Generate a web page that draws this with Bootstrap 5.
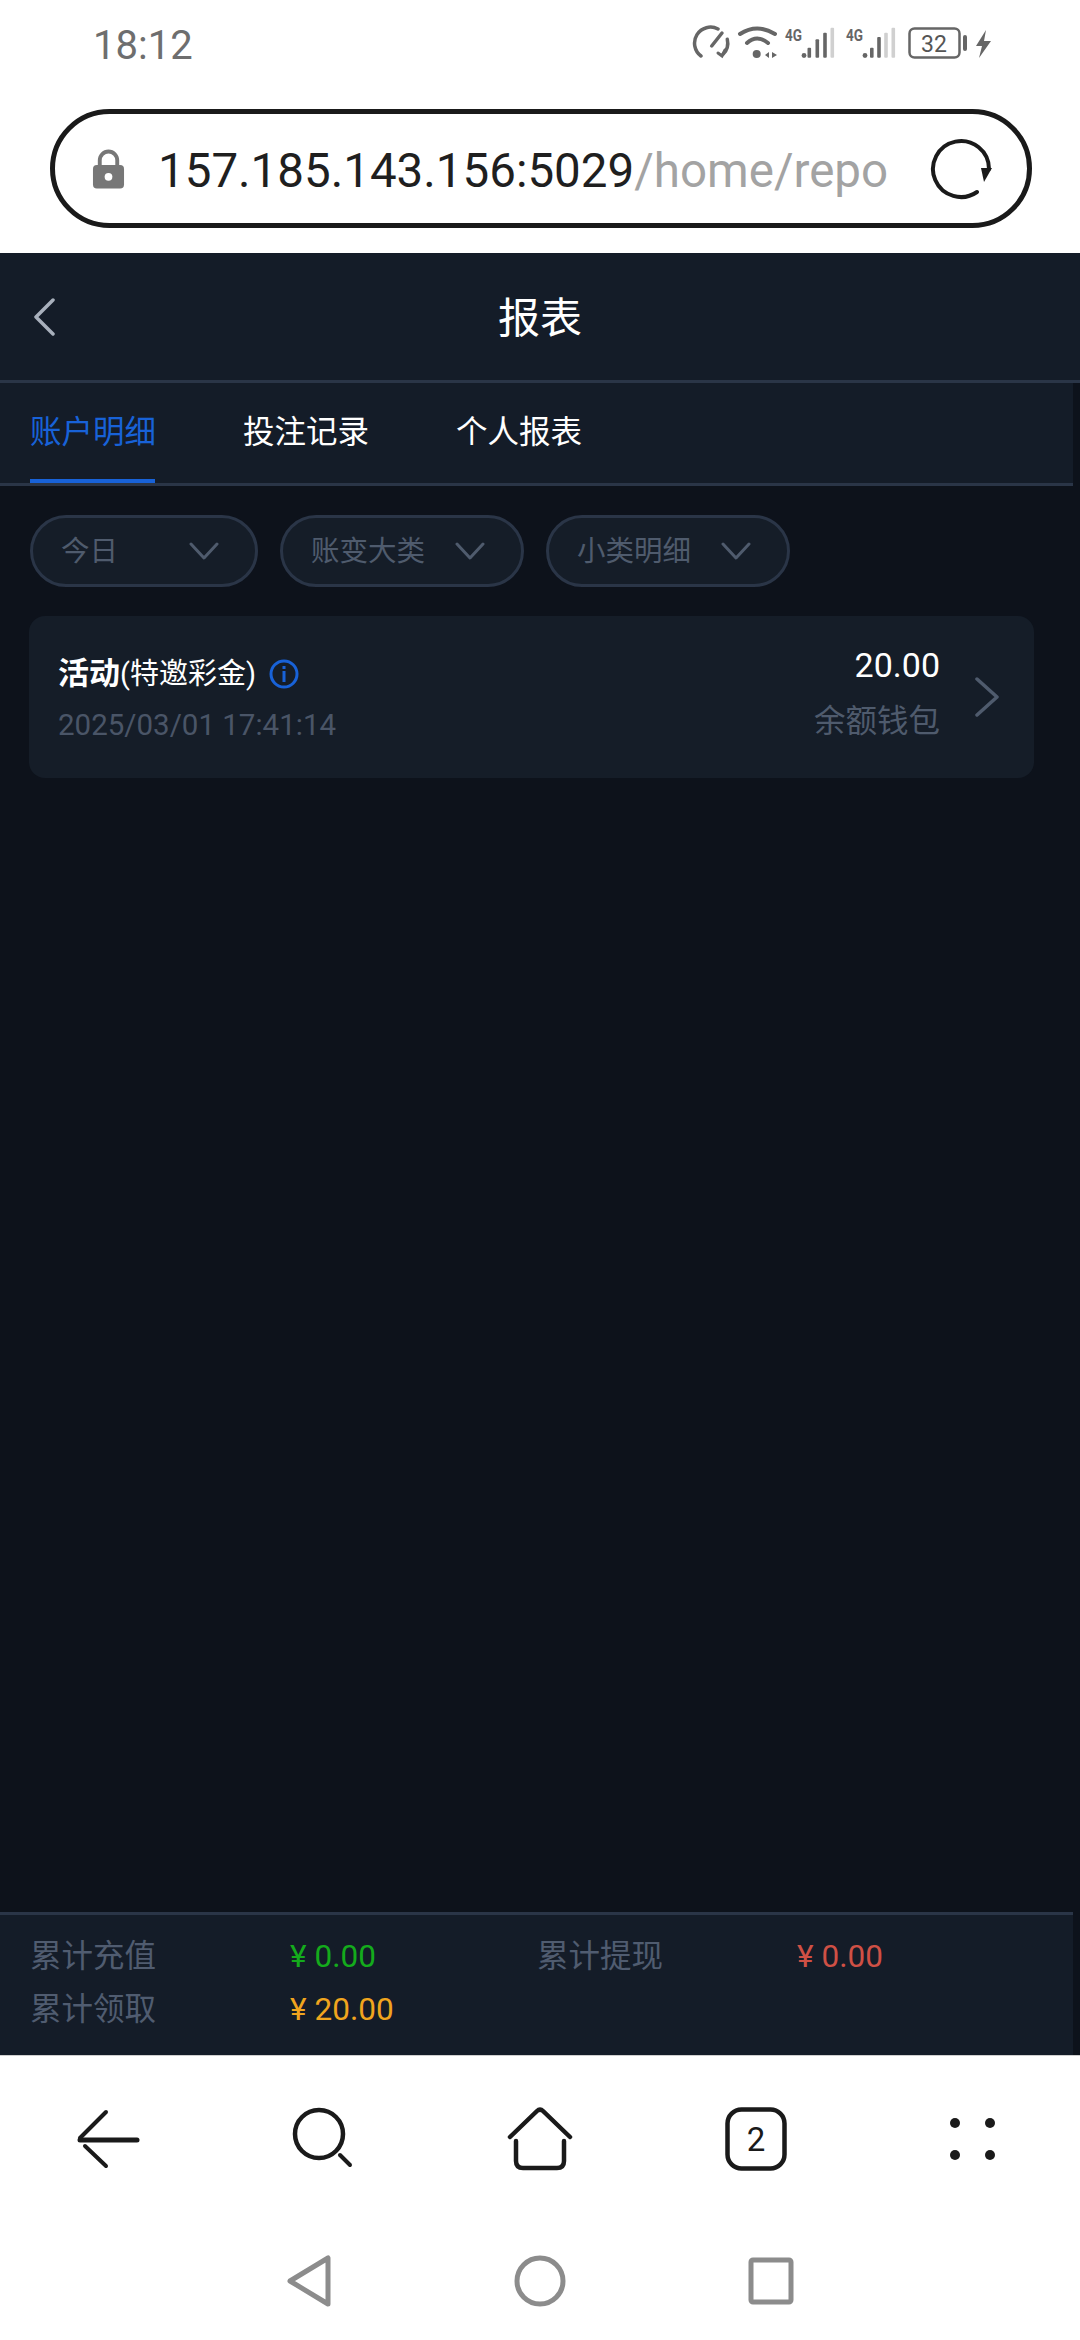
<!DOCTYPE html>
<html lang="zh-CN">
<head>
  <meta charset="UTF-8" />
  <title>报表</title>
  <meta name="viewport" content="width=device-width, initial-scale=1" />
  <link href="https://cdn.jsdelivr.net/npm/bootstrap@5.3.0/dist/css/bootstrap.min.css" rel="stylesheet" />
  <style>
    html, body { height: 2340px; overflow: hidden; }
    body {
      background: #fff;
      font-family: Roboto, "Noto Sans CJK SC", sans-serif;
    }
    .phone { height: 2340px; }
    .status-bar { height: 90px; padding-left: 93px; padding-right: 78px; color: #6e6e6e; }
    .status-time { font-size: 40px; line-height: 1; margin-top: 2px; }
    .status-icons { margin-bottom: 5px; }
    .omnibox {
      height: 119px;
      margin: 19px 48px 25px 50px;
      border: 5px solid #1a1a1a;
      border-radius: 60px;
      padding-left: 37px;
      padding-right: 34px;
    }
    .omni-url {
      width: 730px;
      margin-left: 33px;
      padding-top: 4px;
      font-size: 47.500px;
      line-height: 60px;
      color: #1f1f1f;
      white-space: nowrap;
      overflow: hidden;
    }
    .omni-url span { color: #a3a3a3; }
    .app-shell { background: #0d121b; min-height: 0; }
    .page-head {
      height: 130px;
      background: #141c28;
      border-bottom: 3px solid #2a3547;
      color: #fff;
      font-size: 42px;
    }
    .page-head svg { position: absolute; left: 32px; top: 45px; }
    .page-title { line-height: 1; margin-top: 4px; }
    .tab-bar {
      height: 103px;
      margin-right: 7px;
      background: #141c28;
      border-bottom: 3px solid #2a3547;
      padding-left: 30px;
      gap: 88px;
    }
    .tab-item {
      height: 100px;
      padding: 0;
      font-size: 31.500px;
      line-height: 99px;
      color: #fff;
      width: 125px;
      white-space: nowrap;
    }
    .tab-item.active { color: #1862d8; border-bottom: 4px solid #1862d8; }
    .filter-row { padding: 29px 0 0 30px; gap: 22px; }
    .filter-pill {
      height: 72px;
      background: #151d28;
      border: 3px solid #2a3547;
      border-radius: 36px;
      color: #4f5b6d;
      font-size: 28.500px;
      line-height: 1;
      padding: 3px 36px 0 28px;
    }
    .filter-pill svg { margin-top: -3px; }
    .pill-day { width: 228px; }
    .pill-wide { width: 244px; }
    .record-card {
      height: 162px;
      margin: 29px 46px 0 29px;
      background: #151d28;
      border: 0;
      border-radius: 16px;
      padding: 0 34px 0 29px;
    }
    .record-main { padding-top: 3px; }
    .record-title { color: #fff; font-size: 31px; line-height: 36px; font-weight: 700; }
    .record-title span { font-size: 29px; font-weight: 400; }
    .info-mark { margin-left: 13px; }
    .record-date { color: #4a5567; font-size: 29.500px; line-height: 34px; margin-top: 16px; }
    .record-side { margin-top: -6px; }
    .record-amount { color: #fff; font-size: 34px; line-height: 38px; }
    .record-wallet { color: #4f5b6d; font-size: 31.500px; line-height: 40px; margin-top: 18px; }
    .record-arrow { margin-left: 34px; }
    .summary-bar {
      height: 143px;
      margin-right: 7px;
      background: #141c28;
      border-top: 3px solid #2a3547;
      padding: 15px 0 0 30px;
      font-size: 31.500px;
    }
    .summary-row { height: 53px; line-height: 53px; }
    .sum-label { width: 260px; color: #505c70; }
    .sum-value { width: 247px; }
    .yen-mark { margin-right: 8px; }
    .sum-green { color: #14ab1c; }
    .sum-red { color: #cf5045; }
    .sum-gold { color: #f0a51e; }
    .bottom-rule { height: 1px; background: #cfcfcf; }
    .tool-row { height: 166px; }
    .tool-cell { flex: 1 1 0; }
    .sys-row { height: 118px; }
    .sys-cell { width: 231px; }
    svg { display: block; }
  </style>
</head>
<body>
  <div class="phone d-flex flex-column">
    <!-- status bar -->
    <div class="status-bar d-flex align-items-center justify-content-between">
      <div class="status-time">18:12</div>
      <svg class="status-icons" width="312" height="36" viewBox="0 0 312 36">
        <g fill="none" stroke="#666" stroke-width="3.500" stroke-linecap="round">
          <path d="M11 31 A16 16 0 0 1 28 4" />
          <path d="M37.300 14.300 A16 16 0 0 1 33 29.300" />
          <path d="M21.700 21 L32 8" />
          <path d="M28 28 L32 31 L35 25" stroke-width="3" />
          <path d="M50 9 Q67 -2 85 9" stroke-width="4" />
          <path d="M57 18 Q67 9 78 18" stroke-width="4" />
        </g>
        <circle cx="66.700" cy="29" r="4" fill="#666" />
        <path d="M75 30 L79 27 V33 Z M82 27 L87 30 L82 33 Z" fill="#666" />
        <text x="95" y="16" font-family="Roboto" font-size="16" font-weight="700" textLength="17" lengthAdjust="spacingAndGlyphs" fill="#666">4G</text>
        <g fill="#666">
          <circle cx="114" cy="30.500" r="2.400" />
          <rect x="117.500" y="22.700" width="3.600" height="10" rx="1" />
          <rect x="125.500" y="14.300" width="3.600" height="18.400" rx="1" />
          <rect x="133.200" y="7.700" width="3.600" height="25" rx="1" />
          <rect x="140.500" y="2.700" width="3.600" height="30" rx="1" fill="#d0d0d0" />
        </g>
        <text x="156" y="16" font-family="Roboto" font-size="16" font-weight="700" textLength="17" lengthAdjust="spacingAndGlyphs" fill="#666">4G</text>
        <g fill="#666">
          <circle cx="175" cy="30.500" r="2.400" />
          <rect x="180" y="22.700" width="3.600" height="10" rx="1" />
          <rect x="187.200" y="12" width="3.600" height="20.700" rx="1" />
          <rect x="194.200" y="7.700" width="3.600" height="25" rx="1" fill="#d0d0d0" />
          <rect x="201.500" y="2.700" width="3.600" height="30" rx="1" fill="#d0d0d0" />
        </g>
        <rect x="219.500" y="3.500" width="50" height="29" rx="5" fill="none" stroke="#666" stroke-width="2.500" />
        <text x="244" y="26.500" text-anchor="middle" font-family="Roboto" font-size="23" fill="#555">32</text>
        <rect x="273" y="10" width="4" height="16" rx="2" fill="#666" />
        <path d="M296 5 L286 21 H292 L289 33 L301 16 H294 Z" fill="#666" />
      </svg>
    </div>
    <!-- browser address bar -->
    <div class="omnibox d-flex align-items-center">
      <svg width="33" height="40" viewBox="0 0 34 40">
        <path d="M8 18 V11 A9 9 0 0 1 26 11 V18" fill="none" stroke="#777" stroke-width="4" />
        <rect x="1" y="16" width="32" height="24" rx="4" fill="#777" />
        <circle cx="17" cy="28" r="4" fill="#fff" />
      </svg>
      <div class="omni-url">157.185.143.156:5029<span>/home/report</span></div>
      <svg class="ms-auto" width="64" height="64" viewBox="0 0 64 64">
        <path d="M48 55 A28 28 0 1 1 60 32" fill="none" stroke="#1a1a1a" stroke-width="4" stroke-linecap="round" />
        <path d="M52 31 L63 31 L55 45 Z" fill="#1a1a1a" />
      </svg>
    </div>
    <!-- app -->
    <div class="app-shell flex-grow-1 d-flex flex-column">
      <div class="page-head position-relative d-flex align-items-center justify-content-center">
        <svg width="24" height="38" viewBox="0 0 24 38">
          <path d="M21 2 L4 19 L21 36" fill="none" stroke="#a8b0bc" stroke-width="3.500" stroke-linecap="round" stroke-linejoin="round" />
        </svg>
        <div class="page-title">报表</div>
      </div>
      <nav class="nav tab-bar">
        <a class="nav-link tab-item active" href="#">账户明细</a>
        <a class="nav-link tab-item" href="#">投注记录</a>
        <a class="nav-link tab-item" href="#">个人报表</a>
      </nav>
      <div class="filter-row d-flex">
        <div class="filter-pill pill-day d-flex align-items-center justify-content-between">今日
          <svg width="30" height="18" viewBox="0 0 30 18"><path d="M2 2 L15 16 L28 2" fill="none" stroke="#4f5b6d" stroke-width="3" stroke-linecap="round" stroke-linejoin="round" /></svg>
        </div>
        <div class="filter-pill pill-wide d-flex align-items-center justify-content-between">账变大类
          <svg width="30" height="18" viewBox="0 0 30 18"><path d="M2 2 L15 16 L28 2" fill="none" stroke="#4f5b6d" stroke-width="3" stroke-linecap="round" stroke-linejoin="round" /></svg>
        </div>
        <div class="filter-pill pill-wide d-flex align-items-center justify-content-between">小类明细
          <svg width="30" height="18" viewBox="0 0 30 18"><path d="M2 2 L15 16 L28 2" fill="none" stroke="#4f5b6d" stroke-width="3" stroke-linecap="round" stroke-linejoin="round" /></svg>
        </div>
      </div>
      <div class="card record-card flex-row align-items-center">
        <div class="record-main">
          <div class="record-title d-flex align-items-center">活动<span>(特邀彩金)</span>
            <svg class="info-mark" width="30" height="30" viewBox="0 0 30 30">
              <circle cx="15" cy="15" r="13" fill="none" stroke="#1862d8" stroke-width="3" />
              <rect x="13.500" y="12" width="3" height="11" fill="#1862d8" />
              <rect x="13.500" y="7" width="3" height="3" fill="#1862d8" />
            </svg>
          </div>
          <div class="record-date">2025/03/01 17:41:14</div>
        </div>
        <div class="record-side ms-auto text-end">
          <div class="record-amount">20.00</div>
          <div class="record-wallet">余额钱包</div>
        </div>
        <svg class="record-arrow" width="26" height="40" viewBox="0 0 26 40">
          <path d="M3 2 L23 20 L3 38" fill="none" stroke="#4f5b6d" stroke-width="3.500" stroke-linecap="round" stroke-linejoin="round" />
        </svg>
      </div>
      <div class="summary-bar mt-auto">
        <div class="summary-row d-flex">
          <div class="sum-label">累计充值</div>
          <div class="sum-value sum-green"><span class="yen-mark">¥</span>0.00</div>
          <div class="sum-label">累计提现</div>
          <div class="sum-value sum-red"><span class="yen-mark">¥</span>0.00</div>
        </div>
        <div class="summary-row d-flex">
          <div class="sum-label">累计领取</div>
          <div class="sum-value sum-gold"><span class="yen-mark">¥</span>20.00</div>
        </div>
      </div>
    </div>
    <div class="bottom-rule"></div>
    <!-- browser toolbar -->
    <div class="tool-row d-flex align-items-center">
      <div class="tool-cell d-flex justify-content-center">
        <svg width="64" height="60" viewBox="0 0 64 60">
          <g fill="none" stroke="#1a1a1a" stroke-linecap="round">
            <path d="M4 31 H61" stroke-width="5" />
            <path d="M4 29 L30 3" stroke-width="4" />
            <path d="M9 37 L30 57" stroke-width="4" />
          </g>
        </svg>
      </div>
      <div class="tool-cell d-flex justify-content-center">
        <svg width="64" height="64" viewBox="0 0 64 64">
          <circle cx="27" cy="27" r="24" fill="none" stroke="#1a1a1a" stroke-width="4.500" />
          <path d="M48 48 L58 58" stroke="#1a1a1a" stroke-width="4" stroke-linecap="round" />
        </svg>
      </div>
      <div class="tool-cell d-flex justify-content-center">
        <svg width="66" height="64" viewBox="0 0 66 64">
          <g fill="none" stroke="#1a1a1a" stroke-width="4.500" stroke-linecap="round" stroke-linejoin="round">
            <path d="M3 30 L30 4 Q33 1 36 4 L63 30" />
            <path d="M9 34 V54 Q9 61 16 61 H50 Q57 61 57 54 V34" />
          </g>
        </svg>
      </div>
      <div class="tool-cell d-flex justify-content-center">
        <svg width="62" height="64" viewBox="0 0 62 64">
          <rect x="2.500" y="2.500" width="57" height="59" rx="14" fill="none" stroke="#1a1a1a" stroke-width="4.500" />
          <text x="31" y="44" text-anchor="middle" font-family="Roboto" font-size="33" fill="#1a1a1a">2</text>
        </svg>
      </div>
      <div class="tool-cell d-flex justify-content-center">
        <svg width="48" height="44" viewBox="0 0 48 44">
          <circle cx="7" cy="6" r="5" fill="#1a1a1a" /><circle cx="42" cy="6" r="5" fill="#1a1a1a" />
          <circle cx="7" cy="38" r="5" fill="#1a1a1a" /><circle cx="42" cy="38" r="5" fill="#1a1a1a" />
        </svg>
      </div>
    </div>
    <!-- android nav -->
    <div class="sys-row d-flex align-items-center justify-content-center">
      <div class="sys-cell d-flex justify-content-center">
        <svg width="46" height="52" viewBox="0 0 46 52">
          <path d="M42 3 V49 L4 26 Z" fill="none" stroke="#8c8c8c" stroke-width="5" stroke-linejoin="round" />
        </svg>
      </div>
      <div class="sys-cell d-flex justify-content-center">
        <svg width="52" height="52" viewBox="0 0 52 52">
          <circle cx="26" cy="26" r="23" fill="none" stroke="#8c8c8c" stroke-width="5" />
        </svg>
      </div>
      <div class="sys-cell d-flex justify-content-center">
        <svg width="46" height="48" viewBox="0 0 46 48">
          <rect x="3" y="3" width="40" height="42" rx="2" fill="none" stroke="#8c8c8c" stroke-width="5" />
        </svg>
      </div>
    </div>
  </div>
  <script src="https://cdn.jsdelivr.net/npm/bootstrap@5.3.0/dist/js/bootstrap.bundle.min.js"></script>
</body>
</html>
